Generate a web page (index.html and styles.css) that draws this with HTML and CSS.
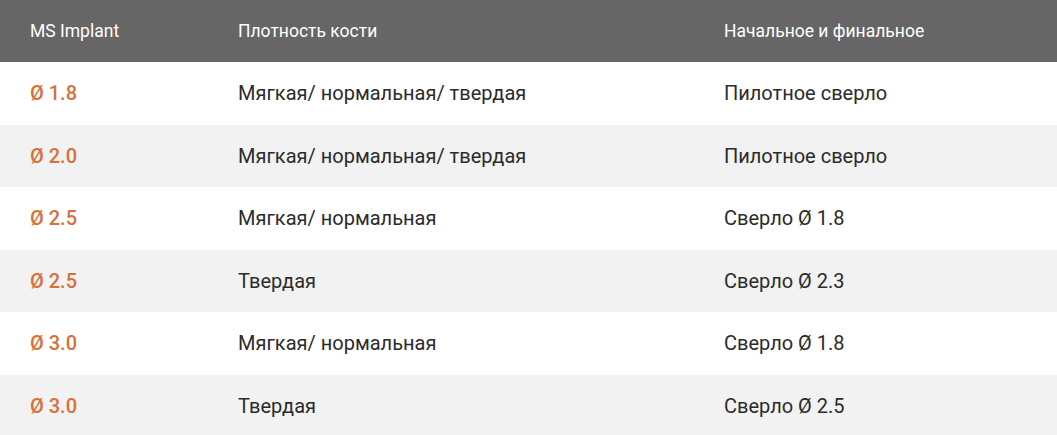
FILE: index.html
```html
<!DOCTYPE html>
<html lang="ru">
<head>
<meta charset="utf-8">
<link rel="stylesheet" href="styles.css">
</head>
<body>
<div class="table">
  <div class="row head">
    <div class="cell">MS Implant</div>
    <div class="cell">Плотность кости</div>
    <div class="cell">Начальное и финальное</div>
  </div>
  <div class="row">
    <div class="cell size">Ø 1.8</div>
    <div class="cell">Мягкая/ нормальная/ твердая</div>
    <div class="cell">Пилотное сверло</div>
  </div>
  <div class="row alt">
    <div class="cell size">Ø 2.0</div>
    <div class="cell">Мягкая/ нормальная/ твердая</div>
    <div class="cell">Пилотное сверло</div>
  </div>
  <div class="row">
    <div class="cell size">Ø 2.5</div>
    <div class="cell">Мягкая/ нормальная</div>
    <div class="cell">Сверло Ø 1.8</div>
  </div>
  <div class="row alt">
    <div class="cell size">Ø 2.5</div>
    <div class="cell">Твердая</div>
    <div class="cell">Сверло Ø 2.3</div>
  </div>
  <div class="row">
    <div class="cell size">Ø 3.0</div>
    <div class="cell">Мягкая/ нормальная</div>
    <div class="cell">Сверло Ø 1.8</div>
  </div>
  <div class="row alt">
    <div class="cell size">Ø 3.0</div>
    <div class="cell">Твердая</div>
    <div class="cell">Сверло Ø 2.5</div>
  </div>
</div>
</body>
</html>
```
FILE: styles.css
```css
html, body {
  margin: 0;
  padding: 0;
  background: #fff;
}
body {
  font-family: Roboto, "Liberation Sans", sans-serif;
  color: #2b2b2b;
}
.table {
  display: flex;
  flex-direction: column;
  width: 1057px;
}
.row {
  display: grid;
  grid-template-columns: 208px 486px 1fr;
  height: 62.5px;
  align-items: center;
  font-size: 20px;
  background: #fff;
}
.row.alt {
  background: #f2f2f2;
}
.row.head {
  height: 62px;
  background: #666666;
  color: #fff;
  font-size: 17.5px;
}
.cell {
  padding-left: 30px;
  white-space: nowrap;
}
.size {
  color: #d9703a;
  font-weight: 500;
}
```
